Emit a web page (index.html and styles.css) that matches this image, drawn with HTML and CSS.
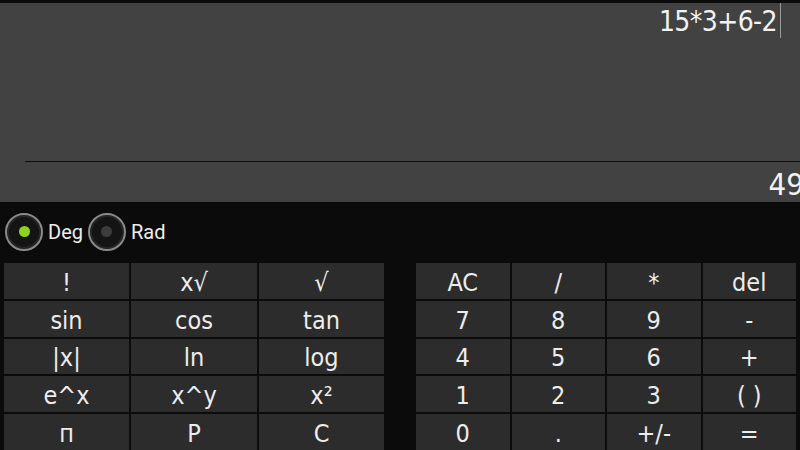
FILE: index.html
```html
<!DOCTYPE html>
<html>
<head>
<meta charset="utf-8">
<link rel="stylesheet" href="styles.css">
</head>
<body>
<div class="app">
  <div class="display">
    <div class="expr"><span class="expr-text">15*3+6-2</span><span class="caret"></span></div>
    <div class="spacer"></div>
    <div class="rule"></div>
    <div class="result"><span class="result-text">49</span></div>
  </div>
  <div class="modes">
    <div class="mode"><span class="radio on"><span class="dot"></span></span><span class="label">Deg</span></div>
    <div class="mode"><span class="radio"><span class="dot"></span></span><span class="label">Rad</span></div>
  </div>
  <div class="keys">
    <div class="grid sci">
      <div class="key">!</div><div class="key">x√</div><div class="key">√</div>
      <div class="key">sin</div><div class="key">cos</div><div class="key">tan</div>
      <div class="key">|x|</div><div class="key">ln</div><div class="key">log</div>
      <div class="key">e^x</div><div class="key">x^y</div><div class="key">x²</div>
      <div class="key">п</div><div class="key">P</div><div class="key">C</div>
    </div>
    <div class="grid num">
      <div class="key">AC</div><div class="key">/</div><div class="key">*</div><div class="key">del</div>
      <div class="key">7</div><div class="key">8</div><div class="key">9</div><div class="key">-</div>
      <div class="key">4</div><div class="key">5</div><div class="key">6</div><div class="key">+</div>
      <div class="key">1</div><div class="key">2</div><div class="key">3</div><div class="key">( )</div>
      <div class="key">0</div><div class="key">.</div><div class="key">+/-</div><div class="key">=</div>
    </div>
  </div>
</div>
</body>
</html>
```
FILE: styles.css
```css
html, body {
  margin: 0;
  padding: 0;
  background: #0b0b0b;
}
.app {
  width: 800px;
  height: 450px;
  overflow: hidden;
  display: flex;
  flex-direction: column;
  background: #0b0b0b;
}
.display {
  margin-top: 3px;
  height: 199px;
  background: #424242;
  display: flex;
  flex-direction: column;
  overflow: hidden;
  font-family: "DejaVu Sans Condensed", "DejaVu Sans", sans-serif;
  font-stretch: condensed;
  color: #f2f2f2;
}
.expr {
  display: flex;
  justify-content: flex-end;
  align-items: stretch;
  padding-right: 19px;
  height: 35px;
}
.expr-text {
  font-size: 28px;
  line-height: 38px;
  letter-spacing: -0.6px;
}
.caret {
  width: 1px;
  background: #9a9a9a;
  margin-left: 3px;
}
.spacer {
  flex: 1;
}
.rule {
  margin-left: 25px;
  height: 1px;
  background: #0e0e0e;
}
.result {
  height: 40px;
  display: flex;
  justify-content: flex-end;
  margin-right: -4px;
}
.result-text {
  font-size: 31px;
  line-height: 44px;
}
.modes {
  height: 61px;
  display: flex;
  align-items: center;
  padding-left: 5px;
  gap: 5px;
  font-family: Roboto, "Noto Sans", sans-serif;
  color: #eeeeee;
}
.mode {
  display: flex;
  align-items: center;
  gap: 5px;
  margin-top: -2px;
}
.radio {
  box-sizing: border-box;
  width: 38px;
  height: 38px;
  border-radius: 50%;
  border: 2px solid #8a8a8a;
  background: #141414;
  display: flex;
  align-items: center;
  justify-content: center;
  box-shadow: inset 0 0 0 2px #262626;
}
.dot {
  width: 11px;
  height: 11px;
  border-radius: 50%;
  background: #3c3c3c;
}
.radio.on .dot {
  background: #8fd11f;
}
.label {
  font-size: 20px;
}
.keys {
  flex: 1;
  display: flex;
  padding: 0 4px;
  gap: 32px;
}
.grid {
  display: grid;
  gap: 2px;
  grid-template-rows: repeat(5, 1fr);
  width: 380px;
}
.sci {
  grid-template-columns: 125px 126px 125px;
}
.num {
  grid-template-columns: repeat(4, 1fr);
}
.key {
  background: #2c2c2c;
  color: #ececec;
  display: flex;
  align-items: center;
  justify-content: center;
  font-family: "DejaVu Sans Condensed", "DejaVu Sans", sans-serif;
  font-stretch: condensed;
  font-size: 25px;
  padding-top: 3px;
  box-sizing: border-box;
}
```
